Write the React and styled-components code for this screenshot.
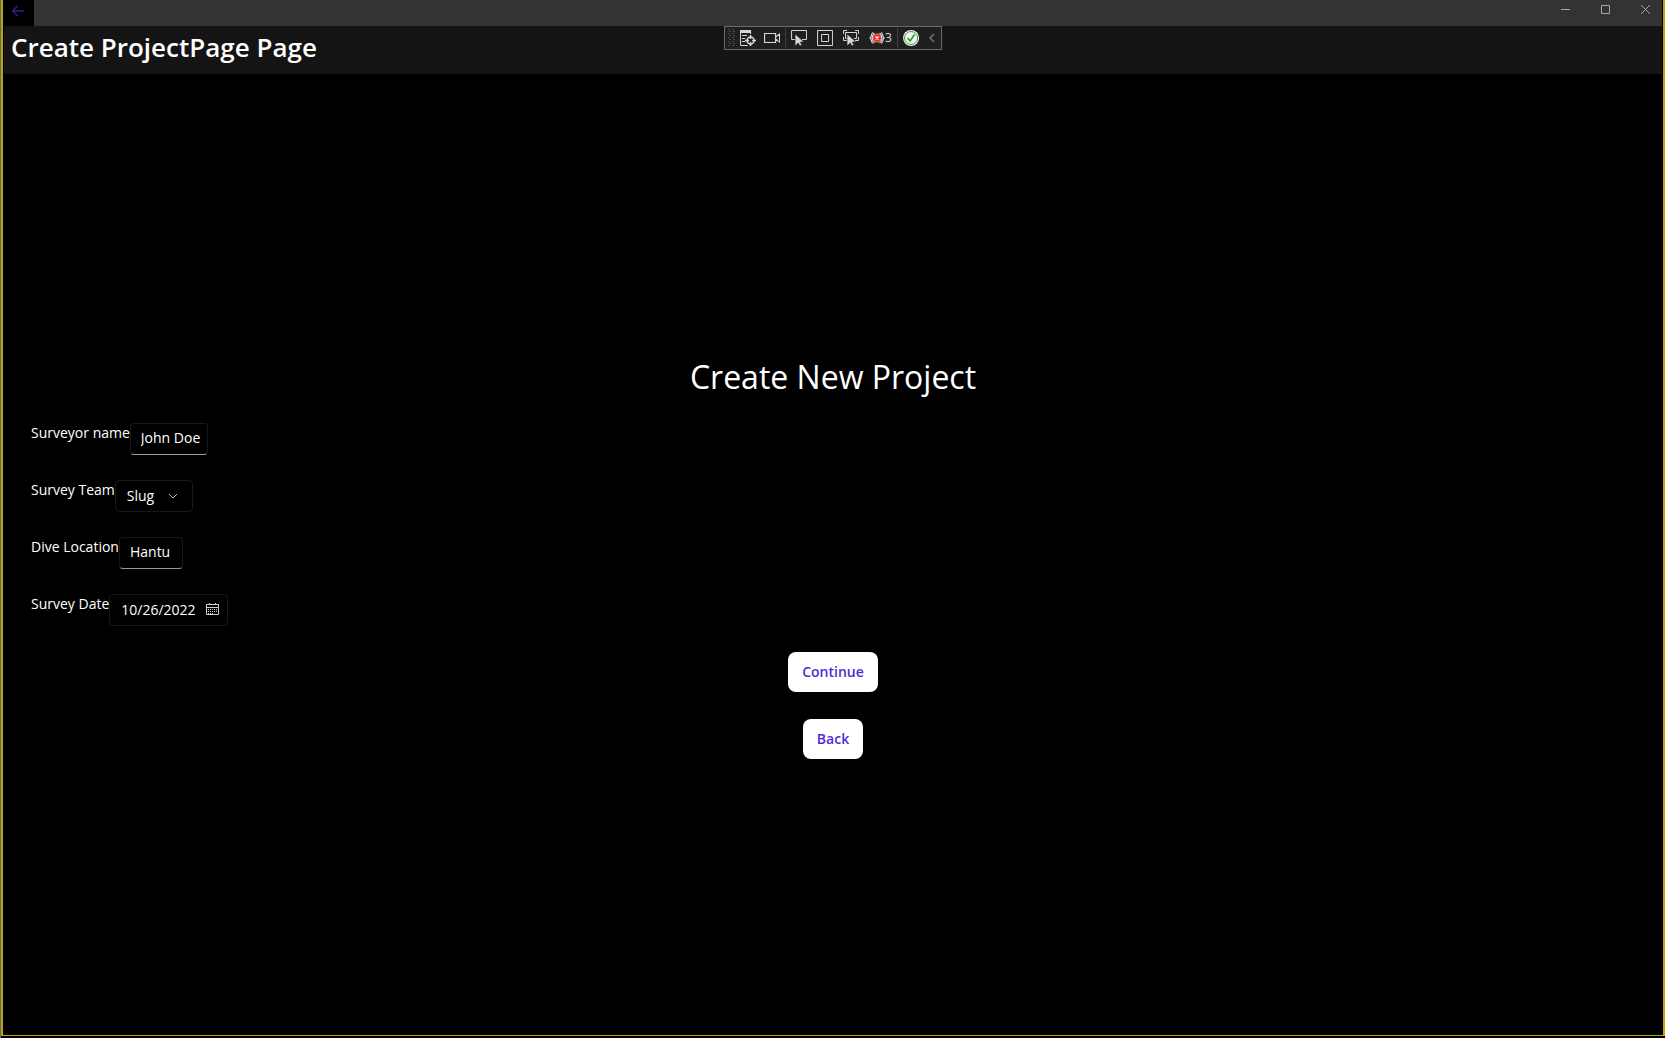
import React from "react";
import styled, { createGlobalStyle } from "styled-components";

const GlobalStyle = createGlobalStyle`
  *, *::before, *::after { box-sizing: border-box; }
  html, body { margin: 0; background: #000; }
  body {
    color: #fff;
    font-family: "Open Sans", "Noto Sans", sans-serif;
    font-size: 14px;
    line-height: 20px;
  }
  button, input, select { font: inherit; color: inherit; margin: 0; }
  svg { display: block; flex: none; }
`;

const Desktop = styled.div`
  min-height: 100vh;
  display: flex;
  background: #000;
  border-left: 1px solid #4c7088;
  padding-bottom: 2px;
`;

const Window = styled.div`
  flex: 1;
  display: flex;
  flex-direction: column;
  position: relative;
  border: solid #c5a100;
  border-width: 0 2px 1px 2px;
  padding: 0 1px;
`;

const TitleBar = styled.div`
  height: 26px;
  display: flex;
  justify-content: space-between;
  background: #333;
`;

const BackArrow = styled.button`
  width: 30px;
  border: 0;
  padding: 0 0 4px 7px;
  display: flex;
  align-items: center;
  background: #000;
  color: #371c92;
`;

const Captions = styled.div`
  display: flex;
  margin-right: -3px;
`;

const CaptionButton = styled.button`
  width: 40px;
  height: 19px;
  border: 0;
  padding: 0;
  display: flex;
  align-items: center;
  justify-content: center;
  background: transparent;
  color: #a6a6a6;
`;

const Header = styled.header`
  height: 48px;
  padding: 0 7px 6px;
  display: flex;
  align-items: center;
  background: #141414;
`;

const PageTitle = styled.h1`
  margin: 0;
  font-size: 26px;
  line-height: 36px;
  font-weight: 600;
`;

const DebugBar = styled.div`
  position: absolute;
  top: 26px;
  left: 50%;
  transform: translateX(-50%);
  height: 24px;
  padding: 0 1px 0 3px;
  display: flex;
  align-items: center;
  gap: 1px;
  background: #1f1f1f;
  border: 1px solid #6b6b6b;
`;

const ToolGroup = styled.div`
  display: flex;
  gap: ${(p) => p.$gap}px;
`;

const ToolButton = styled.button`
  min-width: 24px;
  height: 22px;
  border: 0;
  padding: 0 4px;
  display: flex;
  align-items: center;
  justify-content: center;
  background: transparent;
  color: #d6d6d6;
  font-size: 12px;
  line-height: 16px;
`;

const Collapse = styled(ToolButton)`
  min-width: 16px;
  color: #777;
`;

const Separator = styled.span`
  width: 1px;
  height: 20px;
  background: #424242;
`;

const Main = styled.main`
  flex: 1;
  padding: 4px 27px 0;
  display: flex;
  flex-direction: column;
  justify-content: center;
  gap: 24px;
`;

const Heading = styled.h2`
  margin: 0;
  text-align: center;
  font-size: 32px;
  line-height: 44px;
  font-weight: 400;
`;

const Form = styled.form`
  display: flex;
  flex-direction: column;
  gap: 26px;
`;

const Fields = styled.div`
  display: flex;
  flex-direction: column;
  gap: 25px;
`;

const Field = styled.div`
  display: flex;
  align-items: flex-start;
`;

const Label = styled.label`
  white-space: nowrap;
`;

const Box = styled.div`
  width: ${(p) => p.$width}px;
  height: 32px;
  padding-right: ${(p) => (p.$icon ? 8 : 0)}px;
  display: flex;
  align-items: center;
  border: 1px solid #181818;
  border-bottom-color: ${(p) => (p.$entry ? "#9a9a9a" : "#181818")};
  border-radius: 4px;
  background: #000;
`;

const textControl = `
  flex: 1;
  min-width: 0;
  height: 100%;
  border: 0;
  background: transparent;
  outline: 0;
`;

const TextInput = styled.input`
  ${textControl}
  padding: 0 0 2px 10px;
`;

const DateInput = styled.input`
  ${textControl}
  padding: 0 0 0 11px;
`;

const Select = styled.select`
  ${textControl}
  padding: 0 0 0 11px;
  appearance: none;
`;

const IconButton = styled.button`
  border: 0;
  padding: 0;
  background: transparent;
  color: #d0d0d0;
`;

const Actions = styled.div`
  display: flex;
  flex-direction: column;
  align-items: center;
  gap: 27px;
`;

const ActionButton = styled.button`
  height: 40px;
  padding: 0 14px;
  border: 0;
  border-radius: 8px;
  background: #fff;
  color: #512bd4;
  font-weight: 600;
`;

const Icon = ({ size = 16, w = size, h = size, children }) => (
  <svg width={w} height={h} viewBox={`0 0 ${w} ${h}`} fill="none" stroke="currentColor" aria-hidden="true">
    {children}
  </svg>
);

const Cursor = () => (
  <path d="M4 4v12l3.200-3 1.600 3 2-.9-1.500-3.100H13z" fill="#d6d6d6" stroke="#1f1f1f" strokeWidth=".6" />
);

const gripDots = [];
for (let row = 0; row < 9; row += 1) {
  const shift = row % 2;
  gripDots.push([shift, row * 2], [shift + 4, row * 2]);
}

function DebugToolbar() {
  return (
    <DebugBar role="toolbar" aria-label="Debug">
      <Icon w={7} h={18}>
        {gripDots.map(([x, y]) => (
          <rect key={`${x}-${y}`} x={x} y={y} width="2" height="1" fill="#4a4a4a" stroke="none" />
        ))}
      </Icon>
      <ToolGroup $gap={0}>
        <ToolButton aria-label="Live visual tree">
          <Icon>
            <path d="M0 0h11v3H0z" fill="currentColor" stroke="none" />
            <path d="M.5 2v13.500h7M10.500 2v2M2 5.500h5M2 8.500h3M2 11.500h3" />
            <circle cx="10.500" cy="10.500" r="3.500" strokeWidth="1.500" />
            <path d="M10.500 5v4M10.500 12v4M5 10.500h4M12 10.500h4" strokeWidth="1.500" />
          </Icon>
        </ToolButton>
        <ToolButton aria-label="Camera">
          <Icon>
            <path d="M.5 3.500h11v9H.5zM11.500 7l4-3v8l-4-3" strokeWidth="1.200" />
          </Icon>
        </ToolButton>
      </ToolGroup>
      <Separator />
      <ToolGroup $gap={2}>
        <ToolButton aria-label="Select element">
          <Icon>
            <path d="M4 9.500H.5v-9h15v9H11" />
            <Cursor />
          </Icon>
        </ToolButton>
        <ToolButton aria-label="Layout adorners">
          <Icon>
            <path d="M.5.5h15v15H.5zM4.500 4.500h7v7h-7z" />
          </Icon>
        </ToolButton>
        <ToolButton aria-label="Track focused element">
          <Icon>
            <path d="M.5 4V.5H4M12 .5h3.500V4M.5 7v3.500H4M12 10.500h3.500V7M5 8.500H2.500v-6h11v6H11" />
            <Cursor />
          </Icon>
        </ToolButton>
        <ToolButton aria-label="Binding failures, 3">
          <Icon>
            <path d="M4 2.500c-2 0-1 4-3 5.500C3 9.500 2 13.500 4 13.500M12 2.500c2 0 1 4 3 5.500C13 9.500 14 13.500 12 13.500M5.500 3C3.500 4 4 6 3 8c1 2 .5 4 2.500 5M10.500 3c2 1 1.500 3 2.500 5-1 2-.5 4-2.500 5" strokeWidth="1.200" />
            <circle cx="8" cy="8" r="4.200" fill="#f5281f" stroke="#f2d0cc" strokeWidth=".5" />
            <path d="M6.500 6.500l3 3M9.500 6.500l-3 3" stroke="#fff" strokeWidth="1.300" />
          </Icon>
          3
        </ToolButton>
      </ToolGroup>
      <Separator />
      <ToolButton aria-label="Hot reload">
        <Icon>
          <circle cx="8" cy="8" r="8" fill="#f0f4ef" stroke="none" />
          <circle cx="8" cy="8" r="6.500" stroke="#3f9c42" strokeWidth="1" />
          <path d="M4.500 8l2.500 3 4.500-6.500" stroke="#2f9433" strokeWidth="1.600" />
        </Icon>
      </ToolButton>
      <Collapse aria-label="Collapse toolbar">
        <Icon w={6} h={10}>
          <path d="M5 1L1 5l4 4" strokeWidth="1.500" />
        </Icon>
      </Collapse>
    </DebugBar>
  );
}

export default function App() {
  return (
    <>
      <GlobalStyle />
      <Desktop>
        <Window>
          <TitleBar>
            <BackArrow aria-label="Go back">
              <Icon w={14} h={12}>
                <path d="M6.500 1L1.500 6l5 5M1.500 6H13" strokeWidth="1.300" />
              </Icon>
            </BackArrow>
            <Captions>
              <CaptionButton aria-label="Minimize">
                <Icon size={9}><path d="M0 4.500h9" /></Icon>
              </CaptionButton>
              <CaptionButton aria-label="Maximize">
                <Icon size={9}><path d="M.5.5h8v8h-8z" /></Icon>
              </CaptionButton>
              <CaptionButton aria-label="Close">
                <Icon size={9}><path d="M0 0l9 9M9 0L0 9" /></Icon>
              </CaptionButton>
            </Captions>
          </TitleBar>
          <Header>
            <PageTitle>Create ProjectPage Page</PageTitle>
          </Header>
          <DebugToolbar />
          <Main>
            <Heading>Create New Project</Heading>
            <Form onSubmit={(e) => e.preventDefault()}>
              <Fields>
                <Field>
                  <Label htmlFor="surveyor">Surveyor name</Label>
                  <Box $width={78} $entry>
                    <TextInput id="surveyor" defaultValue="John Doe" />
                  </Box>
                </Field>
                <Field>
                  <Label htmlFor="team">Survey Team</Label>
                  <Box $width={78} $icon>
                    <Select id="team" defaultValue="Slug">
                      <option>Slug</option>
                    </Select>
                    <Icon w={18} h={8}><path d="M3 2l4 4 4-4" stroke="#b8b8b8" /></Icon>
                  </Box>
                </Field>
                <Field>
                  <Label htmlFor="location">Dive Location</Label>
                  <Box $width={64} $entry>
                    <TextInput id="location" defaultValue="Hantu" />
                  </Box>
                </Field>
                <Field>
                  <Label htmlFor="date">Survey Date</Label>
                  <Box $width={119} $icon>
                    <DateInput id="date" defaultValue="10/26/2022" />
                    <IconButton type="button" aria-label="Open calendar">
                      <Icon size={13}>
                        <path d="M.5 1.500h12v10H.5zM.5 4.500h12M3.500 0v2M9.500 0v2" />
                        <path d="M2 6.500h9M2 8.500h9M2 10.500h6" strokeDasharray="1 1" />
                      </Icon>
                    </IconButton>
                  </Box>
                </Field>
              </Fields>
              <Actions>
                <ActionButton type="submit">Continue</ActionButton>
                <ActionButton type="button">Back</ActionButton>
              </Actions>
            </Form>
          </Main>
        </Window>
      </Desktop>
    </>
  );
}
